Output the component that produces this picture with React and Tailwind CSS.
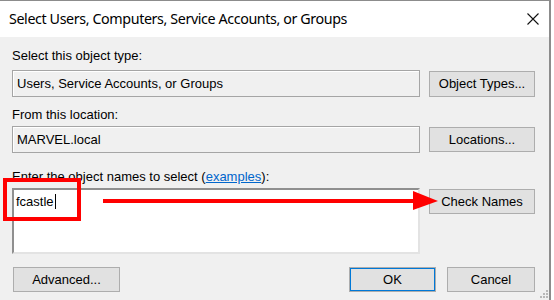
import React from "react";

const Btn = ({ children, className = "" }) => (
  <div
    className={`flex items-center justify-center border border-[#adadad] bg-[#e1e1e1] text-[13px] text-black ${className}`}
  >
    {children}
  </div>
);

const ReadOnlyBox = ({ value }) => (
  <div className="flex h-[27px] w-[408px] items-center border border-[#a5a5a5] bg-[#f0f0f0] pl-[4px] text-[13px] text-black shadow-[inset_1px_1px_0_#ffffff]">
    {value}
  </div>
);

export default function App() {
  return (
    <div className="relative h-[300px] w-[554px] overflow-hidden bg-white font-['Liberation_Sans',Arial,sans-serif]">
      <div className="flex h-[300px] w-[551px] flex-col border-r-[2px] border-t border-[#8c8c8c]">
        {/* title bar */}
        <div className="flex h-[36px] shrink-0 items-center justify-between bg-white pl-[9px] pr-[10px]">
          <span className="font-['Noto_Sans',sans-serif] text-[14.3px] tracking-[-0.4px] text-black">
            Select Users, Computers, Service Accounts, or Groups
          </span>
          <svg width="12" height="12" viewBox="0 0 12 12">
            <path d="M0.5 0.5 L11.5 11.5 M11.5 0.5 L0.5 11.5" stroke="#111" strokeWidth="1.1" />
          </svg>
        </div>

        {/* body */}
        <div className="flex flex-1 flex-col bg-[#f0f0f0] pl-[12px] pt-[11px]">
          <div className="h-[22px] text-[13px] leading-[15px] text-black">Select this object type:</div>
          <div className="flex items-center gap-[9px]">
            <ReadOnlyBox value="Users, Service Accounts, or Groups" />
            <Btn className="h-[26px] w-[106px]">Object Types...</Btn>
          </div>

          <div className="mt-[10px] h-[19px] text-[13px] leading-[15px] text-black">From this location:</div>
          <div className="flex items-center gap-[9px]">
            <ReadOnlyBox value="MARVEL.local" />
            <Btn className="h-[25px] w-[106px]">Locations...</Btn>
          </div>

          <div className="mt-[16px] h-[19px] text-[13px] leading-[15px] text-black">
            Enter the object names to select (
            <span className="text-[#0066cc] underline">examples</span>):
          </div>
          <div className="flex items-start gap-[9px]">
            <div className="h-[66px] w-[408px] border-[2px] border-b-[#e3e3e3] border-l-[#8f8f8f] border-r-[#e3e3e3] border-t-[#8f8f8f] bg-white pl-[2px] pt-[1px] text-[13px] leading-[15px] text-black">
              fcastle<span className="ml-[1px] inline-block h-[15px] w-[1px] translate-y-[3px] bg-black" />
            </div>
            <Btn className="mt-[1px] h-[25px] w-[106px]">Check Names</Btn>
          </div>

          <div className="mt-[13px] flex items-center pr-[14px]">
            <Btn className="ml-[1px] h-[25px] w-[107px]">Advanced...</Btn>
            <div className="flex-1" />
            <Btn className="h-[25px] w-[87px] border-[#0078d7] shadow-[inset_0_0_0_1px_#0078d7]">OK</Btn>
            <Btn className="ml-[11px] h-[25px] w-[88px]">Cancel</Btn>
          </div>
        </div>
      </div>

      {/* resize grip */}
      <svg className="absolute left-[539px] top-[289px]" width="10" height="10" viewBox="0 0 10 10">
        {[
          [7, 1],
          [4, 4],
          [7, 4],
          [1, 7],
          [4, 7],
          [7, 7],
        ].map(([x, y], i) => (
          <rect key={i} x={x} y={y} width="2" height="2" fill="#b8b8b8" />
        ))}
      </svg>

      {/* red annotation box */}
      <div className="absolute left-[3px] top-[178px] h-[43px] w-[78px] border-[4px] border-[#ff0000]" />

      {/* red arrow */}
      <svg className="absolute left-[100px] top-[188px]" width="340" height="26" viewBox="0 0 340 26">
        <rect x="3" y="11" width="312" height="4" fill="#ff0000" />
        <polygon points="313,3 338,13 313,22" fill="#ff0000" />
      </svg>
    </div>
  );
}
